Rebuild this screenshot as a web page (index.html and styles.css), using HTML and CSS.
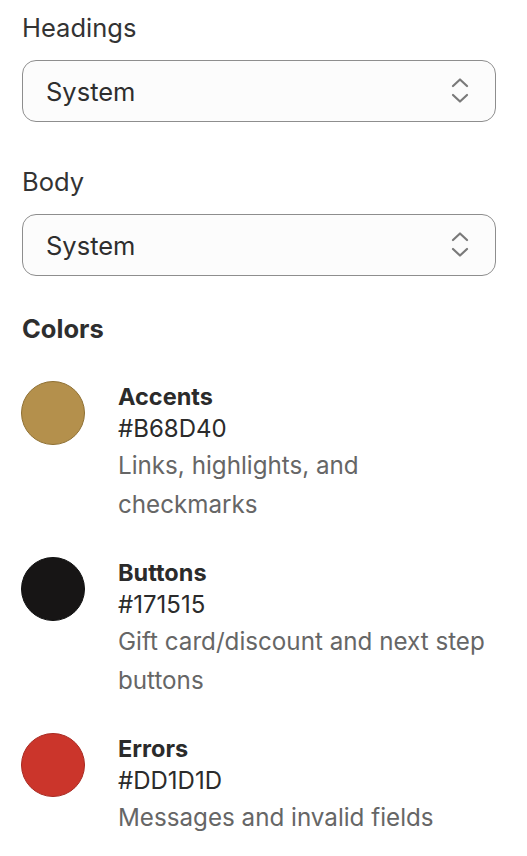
FILE: index.html
```html
<!DOCTYPE html>
<html>
<head>
<meta charset="utf-8">
<link rel="stylesheet" href="styles.css">
</head>
<body>
<div class="panel">
  <div class="field">
    <div class="label">Headings</div>
    <div class="select">
      <span>System</span>
      <svg class="chev" width="18" height="26" viewBox="0 0 18 26"><path d="M2 8 L9 1.5 L16 8" fill="none" stroke="#7a7a7a" stroke-width="2.2" stroke-linecap="round" stroke-linejoin="round"/><path d="M2 17 L9 23.5 L16 17" fill="none" stroke="#7a7a7a" stroke-width="2.2" stroke-linecap="round" stroke-linejoin="round"/></svg>
    </div>
  </div>
  <div class="field">
    <div class="label">Body</div>
    <div class="select">
      <span>System</span>
      <svg class="chev" width="18" height="26" viewBox="0 0 18 26"><path d="M2 8 L9 1.5 L16 8" fill="none" stroke="#7a7a7a" stroke-width="2.2" stroke-linecap="round" stroke-linejoin="round"/><path d="M2 17 L9 23.5 L16 17" fill="none" stroke="#7a7a7a" stroke-width="2.2" stroke-linecap="round" stroke-linejoin="round"/></svg>
    </div>
  </div>
  <div class="section-title">Colors</div>
  <div class="colors">
    <div class="color-row">
      <div class="swatch accent"></div>
      <div class="info">
        <div class="name">Accents</div>
        <div class="hex">#B68D40</div>
        <div class="desc">Links, highlights, and checkmarks</div>
      </div>
    </div>
    <div class="color-row">
      <div class="swatch buttons"></div>
      <div class="info">
        <div class="name">Buttons</div>
        <div class="hex">#171515</div>
        <div class="desc">Gift card/discount and next step buttons</div>
      </div>
    </div>
    <div class="color-row">
      <div class="swatch errors"></div>
      <div class="info">
        <div class="name">Errors</div>
        <div class="hex">#DD1D1D</div>
        <div class="desc">Messages and invalid fields</div>
      </div>
    </div>
  </div>
</div>
</body>
</html>
```
FILE: styles.css
```css
html, body {
  margin: 0;
  padding: 0;
  background: #ffffff;
}
body {
  font-family: Inter, "Noto Sans", sans-serif;
  color: #303030;
  font-size: 24px;
}
.panel {
  padding: 10px 31px 0 22px;
  width: 474px;
}
.field {
  display: flex;
  flex-direction: column;
  gap: 14px;
  margin-bottom: 42px;
}
.label {
  font-size: 25.5px;
  line-height: 36px;
  color: #333333;
}
.select {
  box-sizing: border-box;
  height: 62px;
  border: 1px solid #8e8e8e;
  border-radius: 14px;
  background: #fcfcfc;
  display: flex;
  align-items: center;
  justify-content: space-between;
  padding: 0 26px 0 23px;
  color: #2e2e2e;
  font-size: 25.5px;
}
.chev {
  display: block;
}
.section-title {
  margin-top: -7px;
  font-size: 25.5px;
  font-weight: 700;
  line-height: 36px;
  color: #2e2e2e;
}
.colors {
  margin-top: 34px;
  display: flex;
  flex-direction: column;
  gap: 33px;
}
.color-row {
  display: flex;
  gap: 32px;
  align-items: flex-start;
}
.swatch {
  box-sizing: border-box;
  width: 64px;
  height: 64px;
  margin-left: -1px;
  margin-right: 1px;
  border-radius: 50%;
  flex: none;
}
.accent {
  background: #b4904c;
  border: 1.5px solid #8f7033;
}
.buttons {
  background: #171515;
  border: 1.5px solid #111;
}
.errors {
  background: #cb352b;
  border: 1.5px solid #a82a22;
}
.info {
  flex: 1;
}
.name {
  font-size: 23.5px;
  font-weight: 700;
  line-height: 32px;
  color: #2b2b2b;
}
.hex {
  line-height: 32px;
  color: #2b2b2b;
}
.desc {
  margin-top: 1px;
  font-size: 24.2px;
  line-height: 39px;
  color: #666666;
}
```
